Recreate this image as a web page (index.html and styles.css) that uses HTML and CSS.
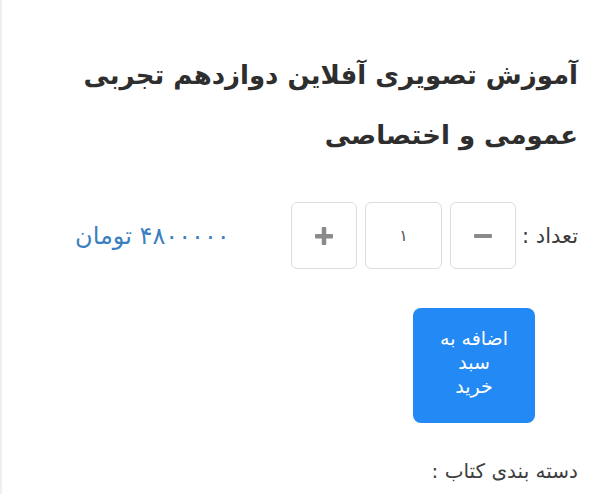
FILE: index.html
```html
<!DOCTYPE html>
<html lang="fa" dir="rtl">
<head>
<meta charset="utf-8">
<link rel="stylesheet" href="styles.css">
</head>
<body>
<div class="page">
  <h1 class="title">آموزش تصویری آفلاین دوازدهم تجربی عمومی و اختصاصی</h1>
  <div class="qty-row">
    <span class="qty-label">تعداد :</span>
    <div class="stepper">
      <button class="step-btn" aria-label="کم">
        <svg width="18" height="18" viewBox="0 0 18 18"><rect x="0" y="7" width="18" height="4" rx="1" fill="#8a8a8a"/></svg>
      </button>
      <div class="qty-input">۱</div>
      <button class="step-btn" aria-label="زیاد">
        <svg width="18" height="18" viewBox="0 0 18 18"><rect x="0" y="7" width="18" height="4.5" rx="1" fill="#8a8a8a"/><rect x="6.75" y="0" width="4.5" height="18" rx="1" fill="#8a8a8a"/></svg>
      </button>
    </div>
    <span class="price">۴۸۰۰۰۰۰ تومان</span>
  </div>
  <div class="cart-wrap">
    <button class="cart-btn"><span class="line">اضافه به</span><span class="line">سبد</span><span class="line">خرید</span></button>
  </div>
  <div class="category">دسته بندی کتاب :</div>
</div>
</body>
</html>
```
FILE: styles.css
```css
html, body {
  margin: 0;
  padding: 0;
  background: #ffffff;
}
body {
  font-family: "DejaVu Sans", "Noto Sans", sans-serif;
  direction: rtl;
}
.page {
  min-height: 494px;
  box-sizing: border-box;
  border-left: 2px solid #efefef;
  padding: 45px 20px 0 60px;
}
.title {
  margin: 0;
  font-size: 26px;
  font-weight: bold;
  line-height: 60px;
  color: #2e2e2e;
}
.qty-row {
  display: flex;
  align-items: center;
  margin-top: 37px;
}
.qty-label {
  font-size: 21px;
  color: #3a3a3a;
  margin-left: 6px;
}
.stepper {
  display: flex;
  gap: 8px;
}
.step-btn, .qty-input {
  box-sizing: border-box;
  height: 67px;
  border: 1px solid #dddddd;
  border-radius: 6px;
  background: #ffffff;
  display: flex;
  align-items: center;
  justify-content: center;
  padding: 0;
}
.step-btn {
  width: 66px;
}
.qty-input {
  width: 77px;
  font-size: 16px;
  color: #555555;
}
.price {
  margin-right: auto;
  margin-left: 13px;
  font-size: 24px;
  letter-spacing: 1px;
  color: #3c7fc0;
}
.cart-wrap {
  display: flex;
  margin-top: 39px;
  padding-right: 43px;
}
.cart-btn {
  box-sizing: border-box;
  width: 122px;
  height: 115px;
  border: none;
  border-radius: 8px;
  background: #2389f5;
  color: #ffffff;
  font-family: "DejaVu Sans", sans-serif;
  font-size: 19px;
  line-height: 24px;
  padding: 0 0 8px 0;
  direction: rtl;
  display: flex;
  flex-direction: column;
  align-items: center;
  justify-content: center;
}
.line {
  display: block;
}
.category {
  margin-top: 36px;
  font-size: 20px;
  color: #3f3f3f;
}
```
